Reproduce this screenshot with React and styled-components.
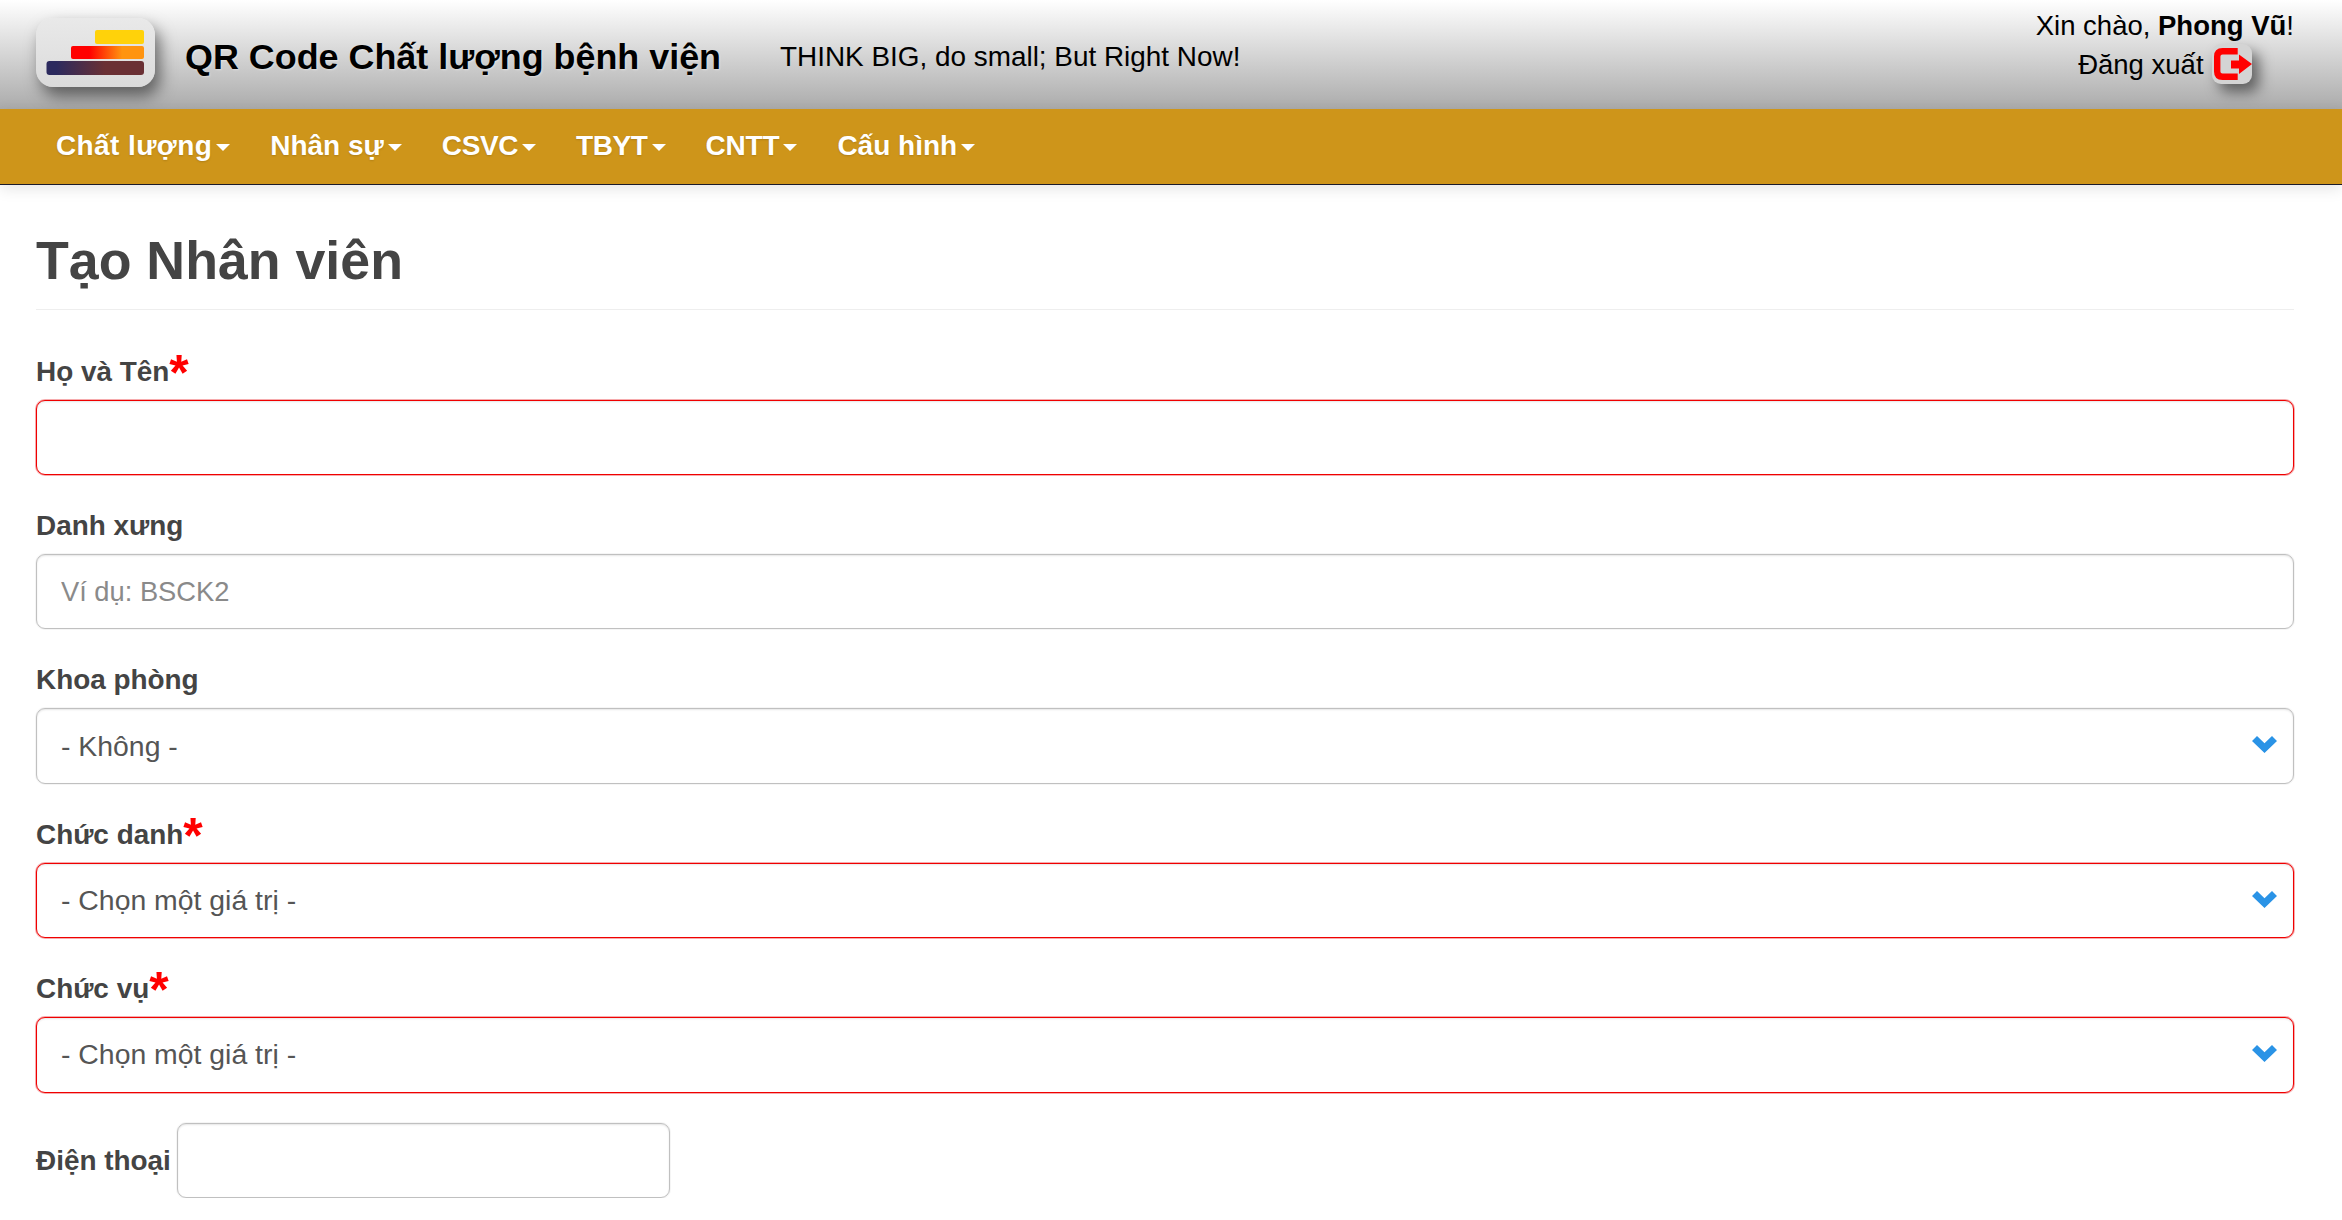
import React from 'react';
import styled, { createGlobalStyle } from 'styled-components';

const GlobalStyle = createGlobalStyle`
  * {
    box-sizing: border-box;
  }
  body {
    margin: 0;
    background: #fff;
    color: #444;
    font-family: "Liberation Sans", Arial, sans-serif;
    font-size: 28px;
  }
`;

const TopBar = styled.header`
  height: 109px;
  padding: 0 48px 0 36px;
  display: flex;
  align-items: center;
  background: linear-gradient(to bottom, #fff 0%, #ababab 100%);
  color: #000;
`;

const LogoBox = styled.div`
  width: 119px;
  height: 69px;
  margin-top: -4px;
  margin-right: 30px;
  border-radius: 17px;
  background: linear-gradient(to bottom, #e9e9e9, #dbdbdb);
  box-shadow: 5px 9px 16px rgba(0, 0, 0, 0.5);
  flex: none;
  svg {
    display: block;
  }
`;

const SiteTitle = styled.div`
  font-size: 35.9px;
  font-weight: bold;
  margin-top: 5px;
  margin-right: 59px;
  white-space: nowrap;
  text-shadow: 1px 1px 2px rgba(255, 255, 255, 0.4);
`;

const Slogan = styled.div`
  font-size: 27.9px;
  margin-top: 4px;
  white-space: nowrap;
`;

const UserBox = styled.div`
  margin-left: auto;
  margin-top: -20px;
  text-align: center;
  font-size: 27.5px;
  line-height: 39px;
`;

const LogoutRow = styled.div`
  display: flex;
  align-items: center;
  justify-content: center;
  gap: 8px;
  height: 39px;
`;

const LogoutIcon = styled.span`
  width: 40px;
  height: 40px;
  border-radius: 9px;
  background: #d4d4d4;
  box-shadow: 7px 8px 14px rgba(0, 0, 0, 0.5);
  svg {
    display: block;
  }
`;

const NavBar = styled.nav`
  height: 76px;
  padding: 0 16px 2px 36px;
  display: flex;
  align-items: center;
  background: #ce951a;
  border-bottom: 1px solid #1a1a2a;
  box-shadow: 0 4px 14px rgba(0, 0, 0, 0.1);
  position: relative;
`;

const NavItem = styled.a`
  display: flex;
  align-items: center;
  padding: 0 20px;
  color: #fff;
  font-size: 28px;
  font-weight: bold;
  letter-spacing: ${({ $spacing }) => $spacing || 0}px;
  text-shadow: 0 1px 2px rgba(0, 0, 0, 0.15);
  white-space: nowrap;
`;

const Caret = styled.span`
  width: 0;
  height: 0;
  margin-left: 4px;
  margin-top: 4px;
  border-top: 7px solid #fff;
  border-left: 7px solid transparent;
  border-right: 7px solid transparent;
`;

const Main = styled.main`
  padding: 45px 48px 0 36px;
`;

const PageTitle = styled.h1`
  margin: 0 0 41px;
  padding-bottom: 19px;
  font-size: 53.7px;
  font-weight: bold;
  line-height: 60px;
  color: #444;
  border-bottom: 1px solid #eee;
`;

const FormGroup = styled.div`
  margin-bottom: 30.3px;
`;

const InlineGroup = styled.div`
  display: flex;
  align-items: center;
  gap: 6.5px;
`;

const Label = styled.label`
  display: block;
  padding-top: 1.5px;
  margin-bottom: 8.5px;
  line-height: 38.6px;
  font-size: 27.9px;
  font-weight: bold;
  color: #444;
`;

const InlineLabel = styled(Label)`
  margin-bottom: 0;
`;

const Star = styled.span`
  color: #f00;
  font-size: 50px;
  line-height: 0;
  vertical-align: -9px;
`;

const fieldCss = `
  display: block;
  height: 75.5px;
  padding: 0 24px;
  background: #fff;
  border-radius: 9px;
  font-family: "Liberation Sans", Arial, sans-serif;
  color: #555;
  outline: none;
`;

const borderColor = ({ $invalid }) => ($invalid ? '#f00000' : '#c0c0c0');

const edgeShadow = ({ $invalid }) =>
  $invalid
    ? 'inset 0 1px 2px rgba(0, 0, 0, 0.1), 0 0 0 1px rgba(230, 15, 20, 0.35)'
    : 'inset 0 1px 2px rgba(0, 0, 0, 0.1), 0 0 0 1px rgba(190, 190, 190, 0.15)';

const TextInput = styled.input`
  ${fieldCss}
  width: ${({ $width }) => $width || '100%'};
  font-size: 27.3px;
  border: 1px solid ${borderColor};
  box-shadow: ${edgeShadow};
  &::placeholder {
    color: #8a8a8a;
    opacity: 1;
  }
`;

const SelectWrap = styled.div`
  position: relative;
`;

const Select = styled.select`
  ${fieldCss}
  width: 100%;
  padding-bottom: 1px;
  font-size: 28.4px;
  appearance: none;
  border: 1px solid ${borderColor};
  box-shadow: ${edgeShadow};
`;

const Chevron = styled.svg`
  position: absolute;
  right: 17px;
  top: 28px;
  pointer-events: none;
`;

const ChevronIcon = () => (
  <Chevron width="25" height="17" viewBox="0 0 25 17">
    <path d="M0 5 L5 0 L12.5 7.3 L20 0 L25 5 L12.5 17 Z" fill="#2a93e6" />
  </Chevron>
);

const SelectField = ({ invalid, value }) => (
  <SelectWrap>
    <Select $invalid={invalid} defaultValue={value}>
      <option>{value}</option>
    </Select>
    <ChevronIcon />
  </SelectWrap>
);

const NAV_ITEMS = [
  { label: 'Chất lượng', spacing: 0.4 },
  { label: 'Nhân sự' },
  { label: 'CSVC', spacing: -0.4 },
  { label: 'TBYT', spacing: -0.4 },
  { label: 'CNTT', spacing: -0.2 },
  { label: 'Cấu hình' },
];

const App = () => (
  <>
    <GlobalStyle />
    <TopBar>
      <LogoBox>
        <svg width="119" height="69" viewBox="0 0 119 69">
          <defs>
            <linearGradient id="midBar" x1="0" x2="1" y1="0" y2="0">
              <stop offset="0.25" stopColor="#ff0000" />
              <stop offset="0.7" stopColor="#ff9410" />
            </linearGradient>
            <linearGradient id="lowBar" x1="0" x2="1" y1="0" y2="0">
              <stop offset="0.1" stopColor="#2c2a5e" />
              <stop offset="0.6" stopColor="#6a3034" />
            </linearGradient>
          </defs>
          <rect x="59" y="12" width="49" height="14" rx="2" fill="#ffd20a" />
          <rect x="35" y="28" width="73" height="13" rx="2" fill="url(#midBar)" />
          <rect x="10.5" y="43" width="97.5" height="14" rx="3" fill="url(#lowBar)" />
        </svg>
      </LogoBox>
      <SiteTitle>QR Code Chất lượng bệnh viện</SiteTitle>
      <Slogan>THINK BIG, do small; But Right Now!</Slogan>
      <UserBox>
        <div>
          Xin chào, <b>Phong Vũ</b>!
        </div>
        <LogoutRow>
          Đăng xuất
          <LogoutIcon>
            <svg width="40" height="40" viewBox="0 0 40 40">
              <path
                d="M25.7 7.2 H10.5 Q5.2 7.2 5.2 12.5 V27.5 Q5.2 32.8 10.5 32.8 H25.7"
                fill="none"
                stroke="#ff0000"
                strokeWidth="6.4"
              />
              <path d="M19 16.5 H27 V10.5 L40 20 L27 30 V24.5 H19 Z" fill="#ff0000" />
            </svg>
          </LogoutIcon>
        </LogoutRow>
      </UserBox>
    </TopBar>
    <NavBar>
      {NAV_ITEMS.map((item) => (
        <NavItem key={item.label} $spacing={item.spacing}>
          {item.label}
          <Caret />
        </NavItem>
      ))}
    </NavBar>
    <Main>
      <PageTitle>Tạo Nhân viên</PageTitle>
      <FormGroup>
        <Label>
          Họ và Tên<Star>*</Star>
        </Label>
        <TextInput $invalid />
      </FormGroup>
      <FormGroup>
        <Label>Danh xưng</Label>
        <TextInput placeholder="Ví dụ: BSCK2" />
      </FormGroup>
      <FormGroup>
        <Label>Khoa phòng</Label>
        <SelectField value="- Không -" />
      </FormGroup>
      <FormGroup>
        <Label>
          Chức danh<Star>*</Star>
        </Label>
        <SelectField invalid value="- Chọn một giá trị -" />
      </FormGroup>
      <FormGroup>
        <Label>
          Chức vụ<Star>*</Star>
        </Label>
        <SelectField invalid value="- Chọn một giá trị -" />
      </FormGroup>
      <InlineGroup>
        <InlineLabel>Điện thoại</InlineLabel>
        <TextInput $width="493px" />
      </InlineGroup>
    </Main>
  </>
);

export default App;
